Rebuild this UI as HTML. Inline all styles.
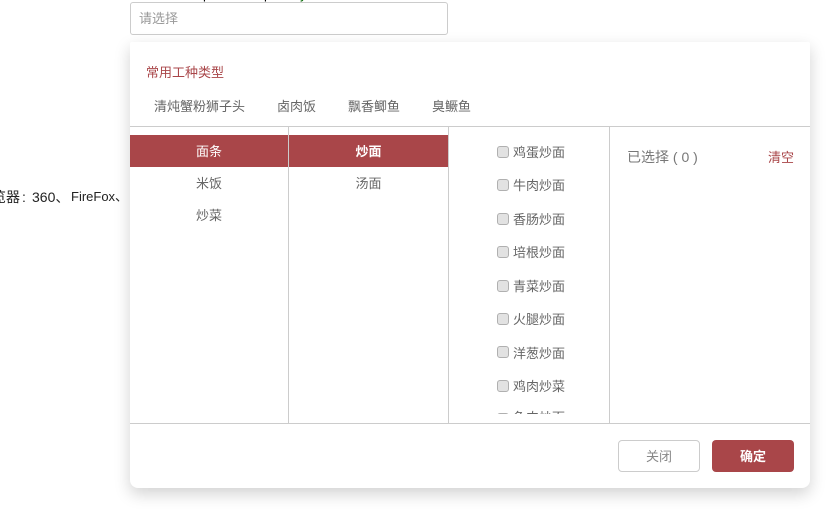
<!DOCTYPE html>
<html lang="zh-CN">
<head>
<meta charset="utf-8">
<style>
html,body{margin:0;padding:0;background:#fff;}
body{position:relative;width:838px;height:509px;overflow:hidden;font-family:"Liberation Sans","Noto Sans CJK SC",sans-serif;font-size:13px;color:#666;}
.a{position:absolute;white-space:nowrap;line-height:20px;}
.c{text-align:center;}
.input{position:absolute;left:130px;top:2px;width:316px;height:31px;border:1px solid #ccc;border-radius:3px;background:#fff;}
.panel{position:absolute;left:130px;top:42px;width:680px;height:446px;background:#fff;border-radius:2px 2px 8px 8px;box-shadow:0 6px 16px rgba(0,0,0,.18);overflow:hidden;}
.h{position:absolute;background:#ccc;height:1px;left:0;width:680px;}
.v{position:absolute;background:#ccc;width:1px;top:84px;height:297px;}
.sel{position:absolute;background:#a94649;height:32px;top:93px;color:#fff;text-align:center;line-height:34px;}
.list{position:absolute;left:319px;top:84px;width:160px;height:288px;overflow:hidden;}
.list .cb{position:absolute;left:48px;width:10px;height:10px;border:1px solid #b0b0b0;border-radius:3px;background:#e2e2e2;}
.list .t{position:absolute;left:64px;white-space:nowrap;line-height:20px;}
.btn{position:absolute;top:398px;border-radius:4px;text-align:center;}
</style>
</head>
<body>
<div class="a" style="left:203px;top:-15px;color:#000;">p</div>
<div class="a" style="left:264px;top:-15px;color:#000;">p</div>
<div class="a" style="left:300px;top:-15px;color:#060;">y</div>
<div class="input"></div>
<div class="a" style="left:139px;top:9px;color:#999;">请选择</div>
<div class="a" style="left:-8px;top:187px;color:#222;font-size:14px;">览器</div>
<div class="a" style="left:22px;top:187px;color:#222;font-size:14px;">:</div>
<div class="a" style="left:32px;top:187px;color:#222;font-size:14px;">360、</div>
<div class="a" style="left:71px;top:187px;color:#222;font-size:13px;">FireFox、</div>
<div class="panel">
  <div class="a" style="left:16px;top:21px;color:#a94649;">常用工种类型</div>
  <div class="a" style="left:24px;top:55px;">清炖蟹粉狮子头</div>
  <div class="a" style="left:147px;top:55px;">卤肉饭</div>
  <div class="a" style="left:218px;top:55px;">飘香鲫鱼</div>
  <div class="a" style="left:302px;top:55px;">臭鳜鱼</div>
  <div class="h" style="top:84px;"></div>
  <div class="sel" style="left:0;width:158px;">面条</div>
  <div class="sel" style="left:159px;width:159px;font-weight:bold;">炒面</div>
  <div class="a c" style="left:0;width:158px;top:132px;">米饭</div>
  <div class="a c" style="left:0;width:158px;top:164px;">炒菜</div>
  <div class="a c" style="left:159px;width:159px;top:132px;">汤面</div>
  <div class="v" style="left:158px;"></div>
  <div class="v" style="left:318px;"></div>
  <div class="v" style="left:479px;"></div>
  <div class="list">
    <div class="cb" style="top:20px;"></div><div class="t" style="top:17px;">鸡蛋炒面</div>
    <div class="cb" style="top:53px;"></div><div class="t" style="top:50px;">牛肉炒面</div>
    <div class="cb" style="top:87px;"></div><div class="t" style="top:84px;">香肠炒面</div>
    <div class="cb" style="top:120px;"></div><div class="t" style="top:117px;">培根炒面</div>
    <div class="cb" style="top:154px;"></div><div class="t" style="top:151px;">青菜炒面</div>
    <div class="cb" style="top:187px;"></div><div class="t" style="top:184px;">火腿炒面</div>
    <div class="cb" style="top:220px;"></div><div class="t" style="top:218px;">洋葱炒面</div>
    <div class="cb" style="top:254px;"></div><div class="t" style="top:251px;">鸡肉炒菜</div>
    <div class="cb" style="top:287px;"></div><div class="t" style="top:282px;">鱼肉炒面</div>
  </div>
  <div class="a" style="left:497px;top:105px;font-size:14px;color:#777;">已选择 ( 0 )</div>
  <div class="a" style="left:638px;top:106px;color:#a94649;">清空</div>
  <div class="h" style="top:381px;"></div>
  <div class="btn" style="left:488px;width:80px;height:30px;line-height:32px;border:1px solid #ccc;color:#888;">关闭</div>
  <div class="btn" style="left:582px;width:82px;height:32px;line-height:34px;background:#a94649;color:#fff;font-weight:bold;">确定</div>
</div>
</body>
</html>
